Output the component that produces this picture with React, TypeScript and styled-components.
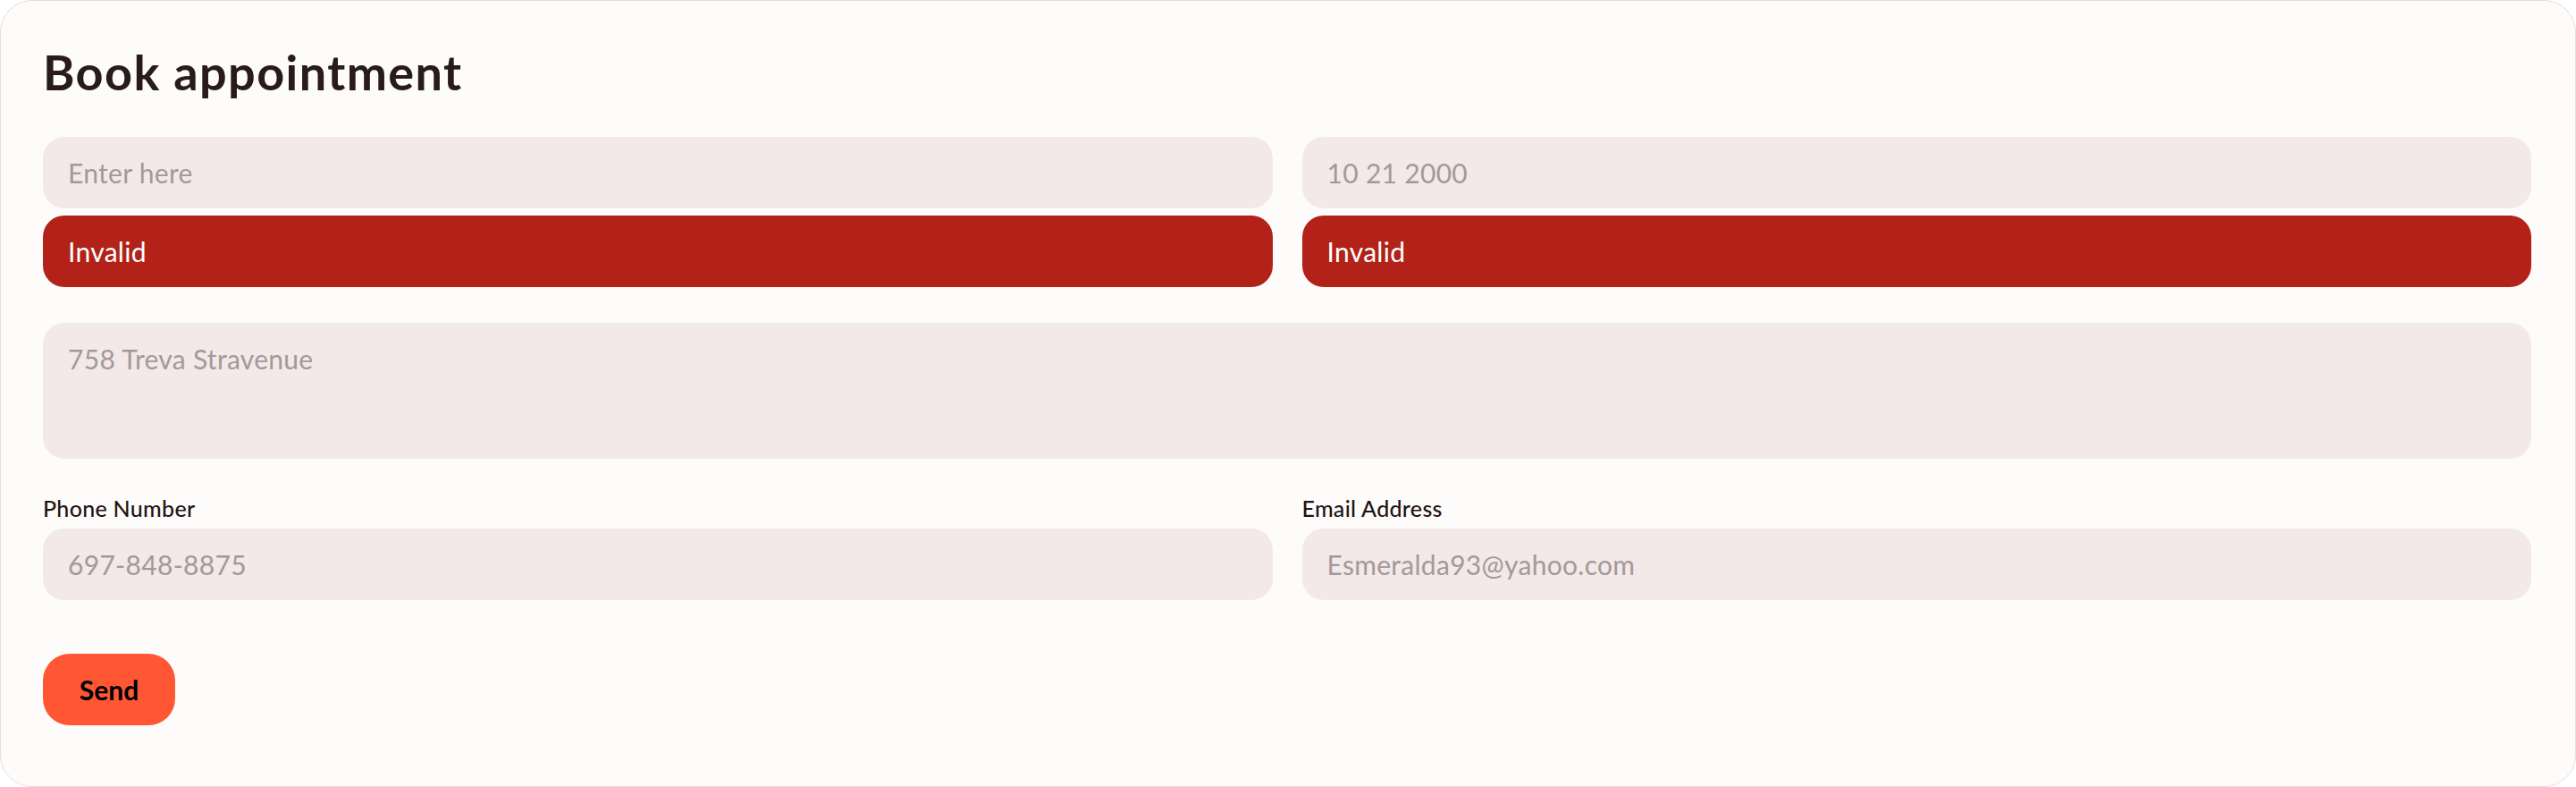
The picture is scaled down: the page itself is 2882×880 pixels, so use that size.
import styled, { createGlobalStyle } from "styled-components";

const GlobalStyle = createGlobalStyle`
  * {
    box-sizing: border-box;
  }
  html, body {
    margin: 0;
    padding: 0;
    background: #ffffff;
  }
  body {
    font-family: Lato, "Noto Sans", sans-serif;
  }
`;

const Card = styled.form`
  width: 2882px;
  height: 880px;
  background: #fdfcfb;
  border: 1px solid #e6dedc;
  border-radius: 36px;
  padding: 49px 49px 0 47px;
  display: flex;
  flex-direction: column;
`;

const Title = styled.h1`
  margin: 0 0 41px 0;
  font-size: 54px;
  line-height: 62px;
  font-weight: 700;
  color: #2a1b1b;
  letter-spacing: 1.4px;
`;

const Fields = styled.div`
  display: flex;
  flex-direction: column;
  gap: 40px;
`;

const Row = styled.div`
  display: grid;
  grid-template-columns: 1fr 1fr;
  column-gap: 33px;
`;

const Field = styled.div`
  display: flex;
  flex-direction: column;
  gap: 8px;
`;

const Label = styled.label`
  font-size: 25px;
  line-height: 30px;
  font-weight: 500;
  color: #1f1414;
  letter-spacing: 0.3px;
`;

const Input = styled.input`
  width: 100%;
  height: 80px;
  border: none;
  outline: none;
  border-radius: 24px;
  background: #f2e9e8;
  padding: 0 28px;
  font-family: inherit;
  font-size: 30px;
  letter-spacing: 0.3px;
  color: #2a1b1b;
  &::placeholder {
    color: #a69899;
  }
`;

const Area = styled.textarea`
  width: 100%;
  height: 152px;
  border: none;
  outline: none;
  resize: none;
  border-radius: 24px;
  background: #f2e9e8;
  padding: 22px 28px;
  font-family: inherit;
  font-size: 30px;
  letter-spacing: 0.3px;
  line-height: 36px;
  color: #2a1b1b;
  &::placeholder {
    color: #a69899;
  }
`;

const Error = styled.div`
  height: 80px;
  border-radius: 24px;
  background: #b22219;
  color: #ffffff;
  font-size: 30px;
  letter-spacing: 0.3px;
  display: flex;
  align-items: center;
  padding: 0 28px;
`;

const Send = styled.button`
  margin-top: 60px;
  align-self: flex-start;
  width: 148px;
  height: 80px;
  border: none;
  border-radius: 30px;
  background: #ff5733;
  color: #000000;
  font-family: inherit;
  font-size: 30px;
  font-weight: 700;
  cursor: pointer;
`;

export default function App() {
  return (
    <>
      <GlobalStyle />
      <Card onSubmit={(e) => e.preventDefault()}>
        <Title>Book appointment</Title>
        <Fields>
          <Row>
            <Field>
              <Input placeholder="Enter here" />
              <Error>Invalid</Error>
            </Field>
            <Field>
              <Input placeholder="10 21 2000" />
              <Error>Invalid</Error>
            </Field>
          </Row>
          <Area placeholder="758 Treva Stravenue" />
          <Row>
            <Field>
              <Label>Phone Number</Label>
              <Input placeholder="697-848-8875" />
            </Field>
            <Field>
              <Label>Email Address</Label>
              <Input placeholder="Esmeralda93@yahoo.com" />
            </Field>
          </Row>
        </Fields>
        <Send type="submit">Send</Send>
      </Card>
    </>
  );
}
